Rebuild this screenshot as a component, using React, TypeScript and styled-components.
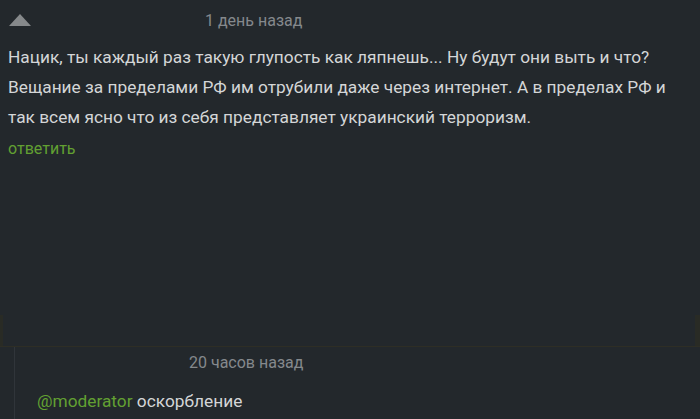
import React from "react";
import styled, { createGlobalStyle } from "styled-components";

const Global = createGlobalStyle`
  html, body { margin: 0; padding: 0; background: #23282c; }
  body { font-family: Roboto, "Noto Sans", sans-serif; overflow: hidden; }
`;

const Page = styled.div`
  width: 700px;
  height: 419px;
  background: #23282c;
  display: flex;
  flex-direction: column;
  overflow: hidden;
`;

const Comment = styled.div`
  flex: none;
  padding: 0 8px;
  height: 315px;
  display: flex;
  flex-direction: column;
`;

const Header = styled.div<{ $h: number }>`
  flex: none;
  height: ${(p) => p.$h}px;
  display: flex;
  align-items: center;
`;

const Arrow = styled.svg`
  width: 22px;
  height: 12px;
  margin-left: 1px;
  flex: none;
`;

const Time = styled.span<{ $ml: number }>`
  margin-left: ${(p) => p.$ml}px;
  font-size: 16px;
  color: #85898c;
`;

const Body = styled.div`
  font-size: 17.3px;
  line-height: 30px;
  color: #d4d6d7;
  margin-top: 2px;
`;

const Reply = styled.div`
  font-size: 16px;
  line-height: 30px;
  color: #62a032;
  margin-top: 2px;
`;

const Strip = styled.div`
  flex: none;
  height: 31px;
  display: flex;
  justify-content: space-between;
  border-bottom: 1px solid #2e2e25;
`;

const Edge = styled.div<{ $w: number }>`
  width: ${(p) => p.$w}px;
  background: #292b25;
`;

const Child = styled.div`
  margin-left: 14px;
  border-left: 1px solid #30353a;
  flex: 1;
  display: flex;
  flex-direction: column;
`;

const ChildBody = styled.div`
  font-size: 17.3px;
  line-height: 30px;
  color: #d4d6d7;
  padding-left: 22px;
  margin-top: 9px;
`;

const Mention = styled.span`
  color: #62a032;
`;

export default function App() {
  return (
    <Page>
      <Global />
      <Comment>
        <Header $h={40}>
          <Arrow viewBox="0 0 22 12">
            <polygon points="11,0 22,12 0,12" fill="#86898b" />
          </Arrow>
          <Time $ml={174}>1 день назад</Time>
        </Header>
        <Body>
          Нацик, ты каждый раз такую глупость как ляпнешь... Ну будут они выть и что?
          <br />
          Вещание за пределами РФ им отрубили даже через интернет. А в пределах РФ и
          <br />
          так всем ясно что из себя представляет украинский терроризм.
        </Body>
        <Reply>ответить</Reply>
      </Comment>
      <Strip>
        <Edge $w={3} />
        <Edge $w={5} />
      </Strip>
      <Child>
        <Header $h={30}>
          <Time $ml={174}>20 часов назад</Time>
        </Header>
        <ChildBody>
          <Mention>@moderator</Mention> оскорбление
        </ChildBody>
      </Child>
    </Page>
  );
}
